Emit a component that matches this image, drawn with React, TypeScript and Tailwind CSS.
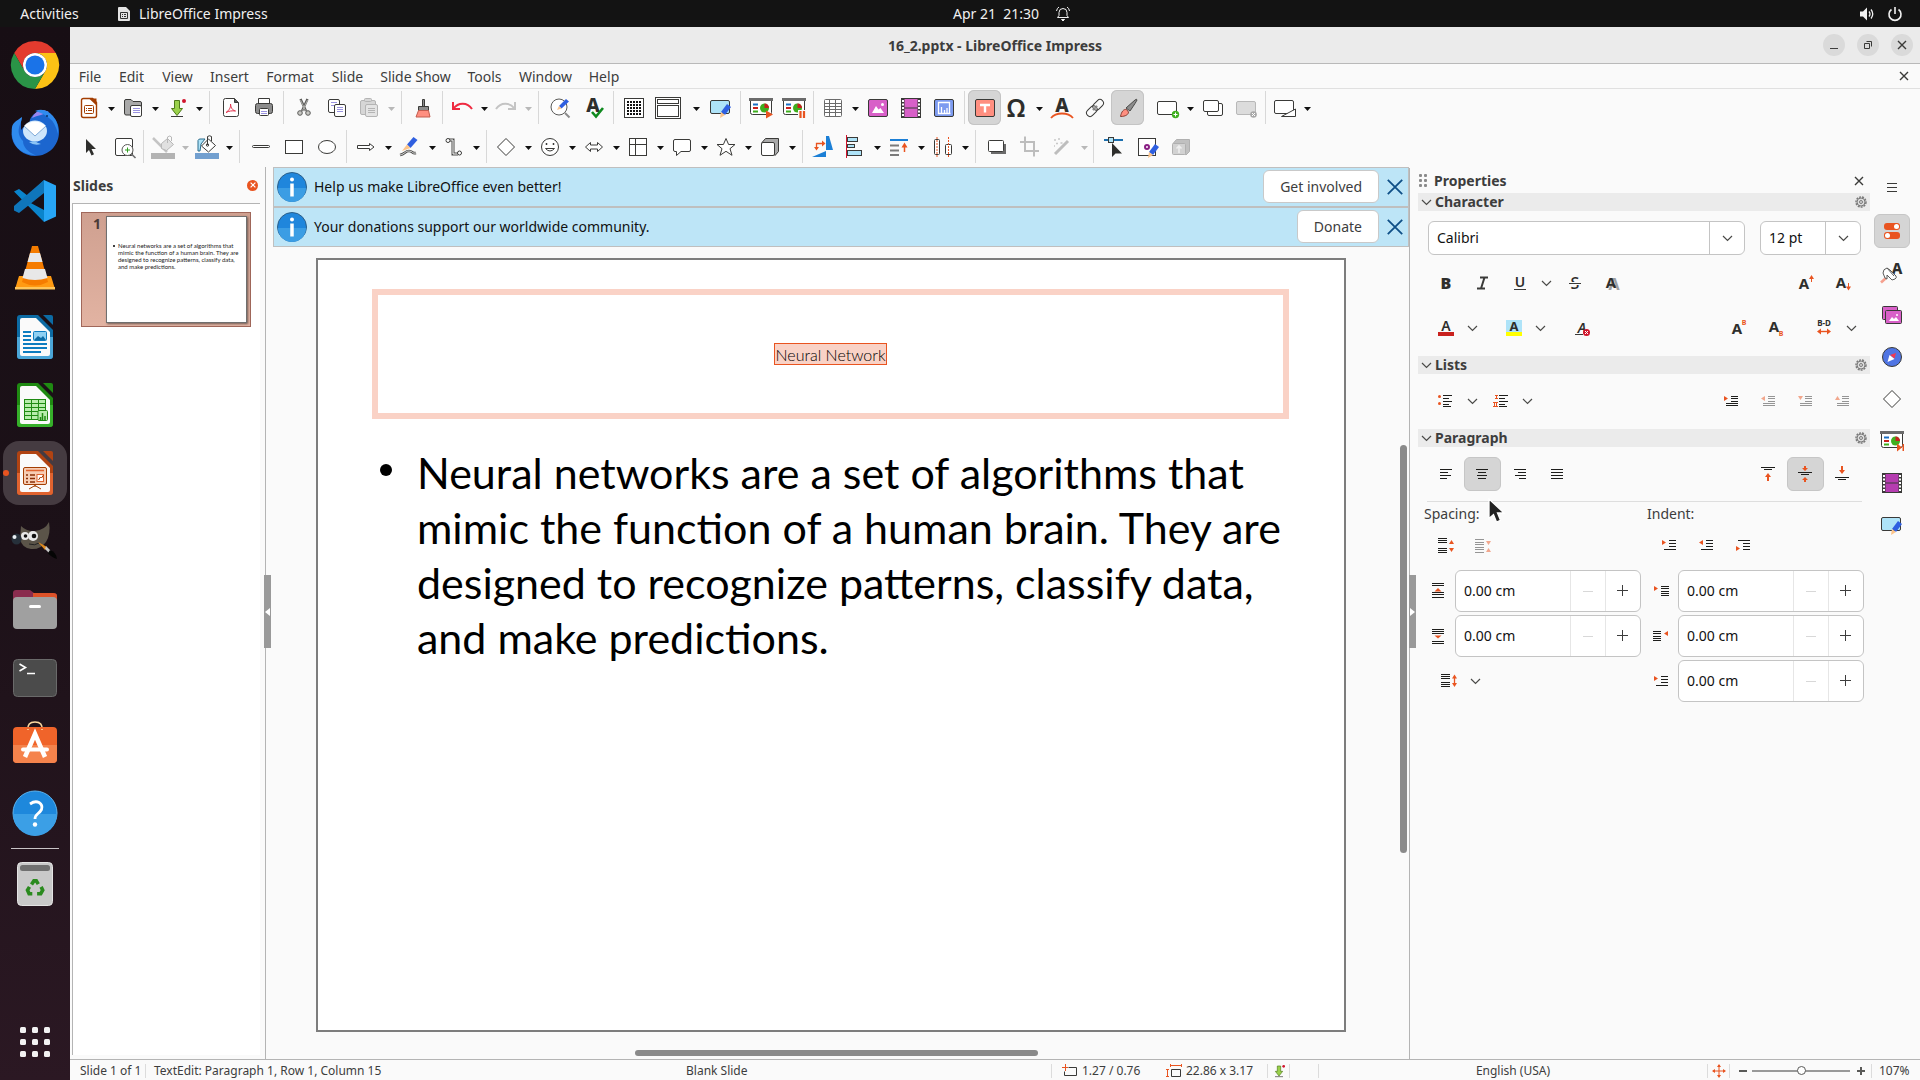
import React from "react";

type Kids = { children?: React.ReactNode };

const INK = "#3a3a38";
const ORANGE = "#e95420";

function Svg({ children, size = 24, box = 24 }: Kids & { size?: number; box?: number }) {
  return (
    <svg width={size} height={size} viewBox={`0 0 ${box} ${box}`} fill="none" stroke={INK} aria-hidden="true" className="block shrink-0 overflow-visible">
      {children}
    </svg>
  );
}

/* ---------- shared pieces of the drawings ---------- */

const Pencil = ({ dx = 0, dy = 0 }: { dx?: number; dy?: number }) => (
  <g transform={`translate(${dx} ${dy})`} stroke="none">
    <path d="M3 7 9 -1 13 2 7 10Z" fill="#2f5fe0" />
    <path d="M3 7 7 10 2 13Z" fill="#fcc48a" />
  </g>
);

const Lines = ({ x, y, w, n, step = 3, c = "#9a93e0" }: { x: number; y: number; w: number; n: number; step?: number; c?: string }) => (
  <g stroke={c}>
    {Array.from({ length: n }, (_, i) => (
      <path key={i} d={`M${x} ${y + i * step + 0.5}h${w}`} />
    ))}
  </g>
);

const Letter = ({ x = 12, y = 17, s = 16, c = "#2e2e2c", w = 700, children, italic = false }: Kids & { x?: number; y?: number; s?: number; c?: string; w?: number; italic?: boolean }) => (
  <text x={x} y={y} fontSize={s} fontWeight={w} fill={c} stroke="none" textAnchor="middle" fontStyle={italic ? "italic" : "normal"} fontFamily="Noto Sans, sans-serif">
    {children}
  </text>
);

const Board = () => (
  <>
    <path d="M1.500 4v12.500q0 2 2 2h17q2 0 2-2V4" fill="#fff" />
    <path d="M0 3.500h24" stroke="#6b6b6b" strokeWidth="3" />
    <path d="M4 8.500h5" stroke="#1a6fc4" strokeWidth="2" />
    <path d="M4 12h5" stroke="#c9211e" strokeWidth="2" />
    <path d="M4 15.500h5" stroke="#3faf1e" strokeWidth="2" />
    <circle cx="15.500" cy="12" r="4.500" fill="#3faf1e" stroke="none" />
    <path d="M15.500 12V7.500a4.500 4.500 0 0 1 4.500 4.500Z" fill="#c9211e" stroke="none" />
  </>
);

const MasterSlide = () => (
  <>
    <rect x="1.500" y="4.500" width="19" height="13" rx="1.500" fill="#aee3f8" />
    <Pencil dx={9} dy={9} />
  </>
);

const Film = ({ c = "#d860c8" }: { c?: string }) => (
  <>
    <rect x="2.500" y="2.500" width="19" height="19" fill={c} />
    <path d="M4 3v18M20 3v18" strokeWidth="3" />
    <path d="M4 4v17M20 4v17" stroke="#fff" strokeWidth="2" strokeDasharray="2 1.500" />
    <path d="M5.500 12h13" />
  </>
);

/* ---------- toolbar drawings ---------- */

const icons: Record<string, React.ReactNode> = {
  newDoc: (
    <>
      <path d="M4.500 4.500q0-2 2-2h9l4 4v13q0 2-2 2h-11q-2 0-2-2Z" fill="#fff" stroke="#a33e03" strokeWidth="1.400" />
      <path d="M12 2.500h7.500v7Z" fill="#a33e03" stroke="none" />
      <rect x="7.500" y="9.500" width="9" height="8" rx="1" stroke="#a33e03" />
      <path d="M9 12.500h1M11 12.500h4M9 14.500h1M11 14.500h4" stroke="#a33e03" />
    </>
  ),
  open: (
    <>
      <path d="M3.500 17V5q0-1.500 1.500-1.500h5l2 2h7q1.500 0 1.500 1.500v12H5q-1.500 0-1.500-2Z" fill="#a9a9a9" />
      <rect x="9.500" y="9.500" width="11" height="11" rx="1.500" fill="#fff" />
      <Lines x={12} y={12} w={7} n={3} step={2} />
    </>
  ),
  save: (
    <>
      <path d="M9.500 4.500h5v8h3l-5.500 7-5.500-7h3Z" fill="#9ad14b" stroke="#4f7a1b" />
      <path d="M6 20.500h12" />
      <circle cx="19" cy="5" r="2" fill="#d0142c" stroke="none" />
    </>
  ),
  pdf: (
    <>
      <path d="M4.500 4.500q0-2 2-2h9l4 4v12q0 2-2 2h-11q-2 0-2-2Z" fill="#fff" />
      <path d="M15.500 2.500v4h4" fill="#5a5a58" />
      <path d="M7 16.500c3-2 5-5 4.500-8.500.500 4.500 2 6 5 7-3.500-.500-6.500 0-9.500 1.500Z" stroke="#e0304a" />
    </>
  ),
  print: (
    <>
      <path d="M6.500 8V2.500h11V8" fill="#fff" />
      <rect x="3.500" y="7.500" width="17" height="10" rx="2" fill="#8c8c8c" />
      <rect x="7.500" y="12.500" width="9" height="7" rx="1" fill="#fff" />
      <Lines x={9} y={15} w={6} n={2} step={2} />
    </>
  ),
  cut: (
    <>
      <path d="M8.500 3 14 15M15.500 3 10 15" stroke="#5a5a58" strokeWidth="2.400" />
      <path d="M8.500 4 13.500 14.500M15.500 4 10.500 14.500" stroke="#c8c8c4" strokeWidth="0.800" />
      <circle cx="8" cy="17" r="2.300" fill="#c8c8c4" stroke="#5a5a58" />
      <circle cx="16" cy="17" r="2.300" fill="#c8c8c4" stroke="#5a5a58" />
    </>
  ),
  copy: (
    <>
      <rect x="3.500" y="3.500" width="11" height="13" rx="1.500" fill="#fff" />
      <Lines x={6} y={6} w={6} n={2} step={3} />
      <rect x="9.500" y="8.500" width="11" height="12" rx="1.500" fill="#fff" />
      <Lines x={12} y={11} w={6} n={3} step={2} />
    </>
  ),
  paste: (
    <>
      <rect x="3.500" y="4.500" width="15" height="14" rx="1.500" fill="#d6d6d6" stroke="#b4b4b4" />
      <rect x="7.500" y="2.500" width="7" height="3" rx="1" fill="#d6d6d6" stroke="#b4b4b4" />
      <rect x="8.500" y="8.500" width="12" height="12" rx="1.500" fill="#e4e4e4" stroke="#b4b4b4" />
      <Lines x={11} y={12} w={7} n={3} step={2} c="#b4b4b4" />
    </>
  ),
  clone: (
    <>
      <path d="M11.500 3.500h2V11h-2Z" fill="#8c8c8c" />
      <path d="M7.500 10.500h10v4h-10Z" fill="#8c8c8c" />
      <path d="M7.500 14.500h10l1.500 6.500H5Z" fill="#ff8f80" stroke="#c35c4e" />
    </>
  ),
  undo: <path d="M3 6v7h7M3.500 12.500C8 6.500 17 5.500 22 13" stroke="#ef2b41" strokeWidth="2" />,
  redo: <path d="M21 6v7h-7M20.500 12.500C16 6.500 7 5.500 2 13" stroke="#c4c4c4" strokeWidth="2" />,
  find: (
    <>
      <circle cx="11" cy="11" r="8" fill="#fff" stroke="#5a5a58" />
      <path d="M17 17l4.500 4.500" stroke="#8c8c8c" strokeWidth="2" />
      <path d="M11 10l7-7 3 2.500-7.500 7Z" fill="#2f5fe0" stroke="none" />
      <path d="M11 10l2.500 2.500L9 14Z" fill="#fcc48a" stroke="none" />
    </>
  ),
  spell: (
    <>
      <Letter x={12} y={16} s={19} w={800}>A</Letter>
      <path d="M11 16l4 4.500L22 12" stroke="#0f8a1f" strokeWidth="2.600" />
    </>
  ),
  grid: (
    <>
      <rect x="2.500" y="2.500" width="19" height="19" fill="#fff" />
      {[6, 9, 12, 15, 18].map((y) => [6, 9, 12, 15, 18].map((x) => <rect key={`${x}-${y}`} x={x - 1} y={y - 1} width="2" height="2" fill="#111" stroke="none" />))}
    </>
  ),
  display: (
    <>
      <rect x=".500" y="1.500" width="25" height="21" fill="#fff" />
      <rect x="2.500" y="3.500" width="21" height="4" fill="#fff" />
      <rect x="2.500" y="9.500" width="21" height="11" fill="#fff" />
    </>
  ),
  master: <MasterSlide />,
  start: (
    <>
      <Board />
      <path d="M17 14.500l7 4-7 4Z" fill={ORANGE} stroke="none" />
    </>
  ),
  pause: (
    <>
      <Board />
      <path d="M16 14h8v9h-8Z" fill="#fafafa" stroke="none" />
      <path d="M18.500 15v7M22 15v7" stroke={ORANGE} strokeWidth="2.200" />
    </>
  ),
  table: (
    <>
      <rect x="3.500" y="3.500" width="17" height="17" rx="1" fill="#fff" stroke="#6b6b6b" />
      <path d="M8.500 3v17M14.500 3v17M3 7.500h17M3 10.500h17M3 13.500h17M3 16.500h17" stroke="#6b6b6b" />
    </>
  ),
  image: (
    <>
      <rect x="2.500" y="3.500" width="19" height="17" rx="1.500" fill="#d860c8" />
      <path d="M6 17l4-7 2.500 3.500L14.500 12l3.500 5Z" fill="#fff" stroke="none" />
      <circle cx="16.500" cy="8.500" r="1.500" fill="#fff" stroke="none" />
    </>
  ),
  film: <Film />,
  chart: (
    <>
      <rect x="2.500" y="3.500" width="19" height="17" rx="1.500" fill="#7d9bf0" />
      <path d="M6.500 6v11.500h12M6 6.500h12M17.500 6v12M9.500 17v-6M12.500 17v-3M15 17v-5" stroke="#fff" strokeWidth="1.300" />
    </>
  ),
  textBox: (
    <>
      <rect x="2.500" y="3.500" width="19" height="17" rx="1.500" fill="#ff8f80" />
      <path d="M7 9h10M12 9v7.500" stroke="#fff" strokeWidth="2.400" />
    </>
  ),
  omega: <Letter x={11} y={21} s={25} w={600}>Ω</Letter>,
  fontwork: (
    <>
      <Letter x={12} y={16} s={19} w={800}>A</Letter>
      <path d="M1 22c5-6 17-6 22 0" stroke={ORANGE} strokeWidth="1.800" />
    </>
  ),
  link: (
    <g transform="rotate(-45 12 12)">
      <rect x="1.500" y="8.500" width="12" height="7" rx="3.500" />
      <rect x="10.500" y="8.500" width="12" height="7" rx="3.500" />
      <path d="M9 12h6" strokeWidth="2" stroke="#8c8c8c" />
    </g>
  ),
  brush: (
    <>
      <path d="M10 12 19 4q2-1.500 2 0-.500 1.500-7 11Z" fill="#8c8c8c" stroke="#4a4a48" />
      <path d="M4.500 20.500c1-5 3-7.500 6-7l2 2.500c0 2.500-3 4.500-8 4.500Z" fill="#ff8f80" stroke="#8a4035" />
    </>
  ),
  newSlide: (
    <>
      <rect x="1.500" y="5.500" width="19" height="13" rx="1.500" fill="#fff" />
      <circle cx="19.500" cy="18.500" r="3.700" fill="#3faf1e" stroke="none" />
      <path d="M17.500 18.500h4M19.500 16.500v4" stroke="#fff" />
    </>
  ),
  dupSlide: (
    <>
      <rect x="6.500" y="7.500" width="15" height="12" rx="1.500" fill="#fff" />
      <rect x="2.500" y="4.500" width="15" height="11" rx="1.500" fill="#fff" />
    </>
  ),
  delSlide: (
    <>
      <rect x="2.500" y="5.500" width="19" height="13" rx="1.500" fill="#dcdcdc" stroke="#b8b8b8" />
      <circle cx="19.500" cy="18.500" r="3.300" fill="#a8a8a8" stroke="none" />
      <path d="M18 17l3 3M21 17l-3 3" stroke="#fff" />
    </>
  ),
  layout: (
    <>
      <rect x="1.500" y="4.500" width="19" height="13" rx="1.500" fill="#fff" />
      <path d="M8.500 20.500 22.500 13v7.500Z" fill="#fff" />
    </>
  ),
  pointer: <path d="M8 4v14l3-3 2.500 5.500 2.500-1.200L13.500 14H18Z" fill="#2e2e2c" stroke="none" />,
  zoom: (
    <>
      <rect x="2.500" y="3.500" width="17" height="17" rx="1.500" fill="#fff" />
      <circle cx="14.500" cy="15" r="5.500" fill="#fff" stroke="#5a5a58" />
      <path d="M12 15h5M14.500 12.500v5" stroke="#2f9e1e" />
      <path d="M18.500 19l4 4" stroke="#6b6b6b" strokeWidth="1.600" />
    </>
  ),
  lineColor: (
    <>
      <path d="M2 3l14 14" stroke="#c4c4c4" strokeWidth="2.500" />
      <path d="M10.500 8.500l6-5 6 6-7 6-5-2Z" fill="#e0e0e0" stroke="#b8b8b8" />
      <path d="M16.500 8V2q2.500-2 4 0v4" stroke="#b8b8b8" />
      <path d="M0 21h24" stroke="#b3b3b3" strokeWidth="6" />
    </>
  ),
  fillColor: (
    <>
      <path d="M3 16V5.500q.500-1.500 2-1.500h5l-4 5-1 7Z" fill="#aee3f8" stroke="#2b6c8c" />
      <path d="M13.500 4l7 6.500-7 6.500-7-6Z" fill="#fff" />
      <path d="M12.500 10V1.500q2-1.500 4 0V6" />
      <circle cx="12.500" cy="10" r="1.200" />
      <path d="M0 21h24" stroke="#729fcf" strokeWidth="6" />
    </>
  ),
  line: <rect x="3.500" y="10.500" width="17" height="2" rx="1" fill="#fff" />,
  rect: <rect x="3.500" y="5.500" width="17" height="13" fill="#fff" />,
  ellipse: <ellipse cx="12" cy="12" rx="8.500" ry="6.500" fill="#fff" />,
  arrowLine: <path d="M3.500 10.500h12v-2l4.500 3.500-4.500 3.500v-2h-12Z" fill="#fff" />,
  curve: (
    <>
      <path d="M9 9.500 15.500 2l4 3-7 8Z" fill="#2f5fe0" stroke="none" />
      <path d="M9 9.500l3.500 3.500L4 16Z" fill="#fcc48a" stroke="none" />
      <path d="M2 20c5-1 5-4 9-4s3 3 7 2" stroke="#4a4a48" strokeWidth="2.600" />
      <path d="M2 20c5-1 5-4 9-4s3 3 7 2" stroke="#fff" strokeWidth="0.800" />
    </>
  ),
  connector: (
    <>
      <path d="M7 5h4v14h5" strokeWidth="3" stroke="#4a4a48" />
      <path d="M7 5h4v14h5" stroke="#fff" />
      <circle cx="6" cy="5.500" r="2" fill="#fff" />
      <circle cx="17.500" cy="18" r="2" fill="#fff" />
    </>
  ),
  diamond: <path d="M12 3.500 20.500 12 12 20.500 3.500 12Z" fill="#fff" />,
  smiley: (
    <>
      <circle cx="12" cy="12" r="8.500" fill="#fff" />
      <path d="M7.500 13.500q4.500 5 9 0Z" fill="#fff" />
      <path d="M8.500 8v2M15.500 8v2" strokeWidth="1.500" />
    </>
  ),
  dblArrow: <path d="M3.500 12l5-4.500v2.500h7V7.500l5 4.500-5 4.500V14h-7v2.500Z" fill="#fff" />,
  flow: (
    <>
      <rect x="3.500" y="3.500" width="17" height="17" fill="#fff" />
      <path d="M9.500 3v17M3 9.500h17" />
    </>
  ),
  callout: <path d="M5 4.500h14q1.500 0 1.500 1.500v9q0 1.500-1.500 1.500h-8l-4.500 4v-4H5q-1.500 0-1.500-1.500V6Q3.500 4.500 5 4.500Z" fill="#fff" />,
  star: <path d="M12 3.500l2.600 6h6.400l-5 4.200 2 6.600-6-4-6 4 2-6.600-5-4.200h6.400Z" fill="#fff" />,
  cube: (
    <>
      <path d="M4 7.500 7.500 3.500H20.500v13l-3.500 4Z" fill="#a9a9a9" />
      <rect x="3.500" y="7.500" width="13" height="13" rx="1.500" fill="#fff" />
    </>
  ),
  rotate: (
    <>
      <path d="M15 1h3l4 14h-7Z" fill="#1b7fd6" stroke="none" />
      <path d="M1 22l14-6v6Z" fill="#1b7fd6" stroke="none" />
      <path d="M5.500 14V8.500H12" stroke={ORANGE} strokeWidth="1.300" />
      <path d="M3 12h5l-2.500 3.500ZM11 5.500v6l3.500-3Z" fill={ORANGE} stroke="none" />
    </>
  ),
  align: (
    <>
      <rect x="4.500" y="2.500" width="10" height="4" fill="#aee3f8" />
      <rect x="4.500" y="9.500" width="7" height="3" fill="#aee3f8" />
      <rect x="4.500" y="15.500" width="14" height="5" fill="#aee3f8" />
      <path d="M3.500 0v23" stroke="#d0142c" />
    </>
  ),
  arrange: (
    <>
      <path d="M3 5h18" stroke="#1b7fd6" strokeWidth="2" />
      <path d="M3 10.500h9M3 15.500h9M3 20h9" stroke="#7a7a7a" strokeWidth="2" />
      <path d="M17.500 17v-6" stroke={ORANGE} strokeWidth="1.500" />
      <path d="M14.500 12.500l3-5 3 5Z" fill={ORANGE} stroke="none" />
    </>
  ),
  distribute: (
    <>
      <rect x="3.500" y="4.500" width="5" height="15" rx="1" fill="#fff" />
      <rect x="14.500" y="9.500" width="6" height="10" rx="1" fill="#fff" />
      <path d="M6 2v20M17.500 2v20" stroke={ORANGE} strokeDasharray="2 1" />
    </>
  ),
  shadow: (
    <>
      <rect x="6" y="9" width="15" height="10" fill="#6b6b6b" stroke="none" />
      <rect x="3.500" y="5.500" width="15" height="11" rx="1" fill="#fff" />
    </>
  ),
  crop: <path d="M2 7.500h14V22M7 2v14.500h14" stroke="#bdbdbd" strokeWidth="2" transform="translate(0 -.500)" />,
  wand: (
    <>
      <path d="M5 19 18 6" stroke="#bdbdbd" strokeWidth="3" />
      <path d="M4 5h2M8 4h2M6 8.500h2M10.500 8h2M4 11h1" stroke="#c8c8c8" strokeWidth="1.500" />
    </>
  ),
  points: (
    <>
      <path d="M2 5h19" stroke="#1b6fae" strokeWidth="2" />
      <rect x="6.500" y="2.500" width="5" height="5" fill="#aee3f8" />
      <path d="M10 8v14l3.500-3.500h6.500Z" fill="#2e2e2c" stroke="none" />
    </>
  ),
  glue: (
    <>
      <rect x="2.500" y="3.500" width="17" height="17" fill="#fff" />
      <circle cx="11" cy="12" r="2" stroke="#8a1f84" strokeWidth="2" />
      <Pencil dx={10} dy={10} />
    </>
  ),
  extrude: (
    <>
      <path d="M4 8.500 7.500 4.500H20.500v12L17 20Z" fill="#c0c0c0" stroke="#b0b0b0" />
      <rect x="3.500" y="8.500" width="13" height="11" rx="1" fill="#d2d2d2" stroke="#b0b0b0" />
      <path d="M10 18v-6M7.500 13.500 10 11l2.500 2.500" stroke="#eee" strokeWidth="1.600" />
    </>
  ),
};

type Tool = { icon: string; label: string; menu?: boolean; off?: boolean; on?: boolean; wide?: string } | { gap: string; bare?: boolean };

const G7: Tool = { gap: "w-[7px]" };
const G8: Tool = { gap: "w-2" };
const G9: Tool = { gap: "w-[9px]" };

const standardBar: Tool[] = [
  { icon: "newDoc", label: "New", menu: true },
  { icon: "open", label: "Open", menu: true },
  { icon: "save", label: "Save", menu: true },
  G9,
  { icon: "pdf", label: "Export as PDF" },
  { icon: "print", label: "Print" },
  G7,
  { icon: "cut", label: "Cut" },
  { icon: "copy", label: "Copy" },
  { icon: "paste", label: "Paste", menu: true, off: true },
  G9,
  { icon: "clone", label: "Clone formatting" },
  G7,
  { icon: "undo", label: "Undo", menu: true },
  { icon: "redo", label: "Redo", menu: true, off: true },
  G9,
  { icon: "find", label: "Find and replace" },
  { icon: "spell", label: "Spelling", wide: "w-[34px]" },
  G7,
  { icon: "grid", label: "Display grid" },
  { icon: "display", label: "Display views", menu: true, wide: "w-[41px]" },
  { gap: "w-[2px]", bare: true },
  { icon: "master", label: "Master slide" },
  G7,
  { icon: "start", label: "Start from first slide" },
  { icon: "pause", label: "Start from current slide" },
  G7,
  { icon: "table", label: "Insert table", menu: true },
  { icon: "image", label: "Insert image" },
  { icon: "film", label: "Insert audio or video" },
  { icon: "chart", label: "Insert chart" },
  G8,
  { icon: "textBox", label: "Insert text box", on: true },
  { icon: "omega", label: "Special character", menu: true },
  { icon: "fontwork", label: "Fontwork" },
  { icon: "link", label: "Insert hyperlink" },
  { icon: "brush", label: "Show draw functions", on: true },
  { gap: "w-2", bare: true },
  { icon: "newSlide", label: "New slide", menu: true },
  { icon: "dupSlide", label: "Duplicate slide" },
  { icon: "delSlide", label: "Delete slide", off: true },
  G7,
  { icon: "layout", label: "Slide layout", menu: true },
];

const drawBar: Tool[] = [
  { icon: "pointer", label: "Select", wide: "w-[35px]" },
  { icon: "zoom", label: "Zoom and pan", wide: "w-8" },
  G7,
  { icon: "lineColor", label: "Line color", menu: true, off: true },
  { icon: "fillColor", label: "Fill color", menu: true },
  G9,
  { icon: "line", label: "Line" },
  { icon: "rect", label: "Rectangle" },
  { icon: "ellipse", label: "Ellipse" },
  G7,
  { icon: "arrowLine", label: "Lines and arrows", menu: true },
  { icon: "curve", label: "Curves and polygons", menu: true },
  { icon: "connector", label: "Connectors", menu: true },
  G8,
  { icon: "diamond", label: "Basic shapes", menu: true },
  { icon: "smiley", label: "Symbol shapes", menu: true },
  { icon: "dblArrow", label: "Block arrows", menu: true },
  { icon: "flow", label: "Flowchart", menu: true },
  { icon: "callout", label: "Callouts", menu: true },
  { icon: "star", label: "Stars and banners", menu: true },
  { icon: "cube", label: "3D objects", menu: true },
  G8,
  { icon: "rotate", label: "Rotate" },
  { icon: "align", label: "Align objects", menu: true },
  { icon: "arrange", label: "Arrange", menu: true },
  { icon: "distribute", label: "Distribute", menu: true },
  G9,
  { icon: "shadow", label: "Shadow" },
  { icon: "crop", label: "Crop image", off: true },
  { icon: "wand", label: "Filter", menu: true, off: true },
  G7,
  { icon: "points", label: "Toggle point edit mode", wide: "w-[34px]" },
  { icon: "glue", label: "Show gluepoint functions" },
  { icon: "extrude", label: "Toggle extrusion", off: true },
];

function Toolbar({ tools, label }: { tools: Tool[]; label: string }) {
  return (
    <div role="toolbar" aria-label={label} className="flex items-center pl-[3px]">
      {tools.map((t, i) =>
        "gap" in t ? (
          <div key={i} className={`flex h-[33px] shrink-0 justify-center ${t.gap}`}>
            {!t.bare && <span className="w-px bg-[#d8d8d8]" />}
          </div>
        ) : (
          <div key={i} className="flex shrink-0 items-center">
            <button
              aria-label={t.label}
              className={`flex h-[35px] items-center rounded-md ${t.menu ? "pl-1" : "pl-[5px]"} ${t.wide ?? "w-[33px]"} ${t.on ? "bg-[#d5d5d5] ring-1 ring-[#c4c4c4] ring-inset" : ""}`}
            >
              {t.icon === "display" ? (
                <svg width="26" height="24" viewBox="0 0 26 24" fill="none" stroke={INK} aria-hidden="true" className="ml-px">
                  {icons.display}
                </svg>
              ) : (
                <Svg>{icons[t.icon]}</Svg>
              )}
            </button>
            {t.menu && (
              <button aria-label={`${t.label} options`} className="flex h-[33px] w-[11px] items-center justify-center pt-[3px]">
                <svg width="7" height="4" viewBox="0 0 7 4" aria-hidden="true">
                  <path d="M0 0h7L3.500 4Z" fill={t.off ? "#b8b8b8" : "#111"} />
                </svg>
              </button>
            )}
          </div>
        )
      )}
    </div>
  );
}

/* ---------- dock ---------- */

const LibreDoc = ({ dark, light, children }: Kids & { dark: string; light: string }) => (
  <>
    <path d="M6 5q0-3 3-3h18l15 15v26q0 3-3 3H9q-3 0-3-3Z" fill={dark} stroke="none" />
    <path d="M6 24h36v19q0 3-3 3H9q-3 0-3-3Z" fill={light} stroke="none" />
    <path d="M9 7q0-2 2-2h14l14 14v22q0 2-2 2H11q-2 0-2-2Z" fill="#fafafa" stroke="none" />
    <path d="M32 2h8q2 0 2 2v8Z" fill={dark} stroke="none" />
    <g transform="translate(-1 1)">{children}</g>
  </>
);

const dockIcons: { label: string; active?: boolean; art: React.ReactNode }[] = [
  {
    label: "Google Chrome",
    art: (
      <g stroke="none">
        <path d="M24 12H44.800A24 24 0 0 0 3.200 12L13.600 30A12 12 0 0 1 24 12Z" fill="#e33b2e" />
        <path d="M44.800 12H24A12 12 0 0 1 34.400 30L24 48A24 24 0 0 0 44.800 12Z" fill="#fcc215" />
        <path d="M3.200 12A24 24 0 0 0 24 48L34.400 30A12 12 0 0 1 13.600 30Z" fill="#2a9447" />
        <circle cx="24" cy="24" r="12" fill="#fff" />
        <circle cx="24" cy="24" r="9.500" fill="#1a73e8" />
      </g>
    ),
  },
  {
    label: "Thunderbird",
    art: (
      <g stroke="none">
        <path d="M10 9C6 13-1 20 1 29c2 10 12 18 23 18 14 0 24-11 24-24 0-6-2-11-5-14l-3 1C36 2 28 0 22 6c-3 3-4 6-3 9-4 1-7 3-9 6Z" fill="#1c66cf" />
        <path d="M1 18c-2 14 6 28 23 28-7-3-12-8-12-14-4-4-5-9-4-13 1-5 3-7 3-11C7 11 2 13 1 18Z" fill="#2f8bee" />
        <path d="M21 9C24 2 31-1 38 3l-8 3q-5 1-9 3Z" fill="#9a86ee" />
        <path d="M24 2q10-4 18 5 6 7 5 18-3-12-9-16-6-5-14-7Z" fill="#2f8bee" />
        <ellipse cx="24" cy="22" rx="12" ry="10.500" fill="#cfe6fb" />
        <path d="M13 17q11-9 22 0L24 27Z" fill="#fff" />
        <path d="M13 17l11 10 11-10" stroke="#7fa9d6" fill="none" />
        <path d="M18 33q5 4 12 2-4-1-6-3Z" fill="#8cc4f5" />
        <circle cx="36" cy="7" r="1" fill="#0b2f66" />
      </g>
    ),
  },
  {
    label: "Visual Studio Code",
    art: (
      <g stroke="none">
        <path d="M33 3 17 19 8 12 3 14.500 33 45V33L16 24 33 15Z" fill="#0a84cc" />
        <path d="M3 33.500 8 36 33 16V3L3 29Z" fill="#0f76bb" />
        <path d="M33 3l12 5.500v31L33 45Z" fill="#27a5f5" />
      </g>
    ),
  },
  {
    label: "VLC media player",
    art: (
      <g stroke="none">
        <path d="M8 31h32l4 13H4Z" fill="#ff9a12" />
        <path d="M4 42h40v2.500H4Z" fill="#ffc65a" />
        <path d="M21 1h6l10 36q-13 7-26 0Z" fill="#f57c00" />
        <path d="M19 8h10l2.500 9h-15ZM14 24h20l2.500 9q-12.500 4-25 0Z" fill="#e8e8e8" />
      </g>
    ),
  },
  {
    label: "LibreOffice Writer",
    art: (
      <LibreDoc dark="#0c6ba4" light="#4ba6d8">
        <path d="M13 18h8M13 22h8M13 26h8M13 30h24M13 34h24M13 38h18" stroke="#0c7cc0" strokeWidth="1.800" />
        <rect x="23.500" y="17.500" width="13" height="9" rx="1" fill="#8fd0f2" stroke="#0c7cc0" />
        <path d="M24 26l4-4 3 2 2-2 3 4Z" fill="#0c6ba4" stroke="none" />
      </LibreDoc>
    ),
  },
  {
    label: "LibreOffice Calc",
    art: (
      <LibreDoc dark="#1f8a12" light="#36b02a">
        <rect x="14.500" y="17.500" width="21" height="20" fill="#b8ecac" stroke="#1f8a12" />
        <path d="M21.500 17v20M28.500 17v20M14 21.500h21M14 25.500h21M14 29.500h21M14 33.500h21" stroke="#1f8a12" />
        <rect x="28" y="28.500" width="9.500" height="10" rx="1" fill="#b8ecac" stroke="#1f8a12" />
        <path d="M30.500 38v-3M32.500 38v-7M35 38v-4" stroke="#1f8a12" strokeWidth="1.500" />
      </LibreDoc>
    ),
  },
  {
    label: "LibreOffice Impress",
    active: true,
    art: (
      <LibreDoc dark="#b04312" light="#e0632f">
        <rect x="13.500" y="17.500" width="23" height="17" rx="1.500" fill="#f6cdb4" stroke="#a33e03" />
        <path d="M16 20.500h18" stroke="#e0632f" strokeWidth="1.500" />
        <path d="M16 25h2M16 28.500h2M16 32h2M20 25h5M20 28.500h5M20 32h5" stroke="#8a2f06" strokeWidth="1.600" />
        <rect x="27" y="24.500" width="6.500" height="7" fill="#fff" stroke="#e0632f" />
        <path d="M28.500 30l2-3 1 1 2-3M19 39l6-3.500L31 39M25 35v2" stroke="#a33e03" />
      </LibreDoc>
    ),
  },
  {
    label: "GIMP",
    art: (
      <g stroke="none">
        <path d="M10 9q6 6 14 5 10-1 14-9 2 12-3 20-6 8-15 7-9-1-11-10Z" fill="#5b5449" />
        <circle cx="14" cy="19" r="4" fill="#e8e8e8" />
        <circle cx="22" cy="19" r="5" fill="#e8e8e8" />
        <circle cx="14.500" cy="19" r="1.800" fill="#111" />
        <circle cx="23" cy="19" r="2.300" fill="#111" />
        <ellipse cx="5.500" cy="22" rx="5" ry="5.500" fill="#26303a" />
        <circle cx="3.500" cy="20" r="2" fill="#e8eef2" />
        <path d="M18 27q6 2 10-1" stroke="#222" fill="none" />
        <path d="M27 25l9 5-2 3Z" fill="#e08a1e" />
        <path d="M35 29l5 5-2 2-4-4Z" fill="#c8c8c8" />
        <path d="M39 33q6 2 7 9-6-2-9-6Z" fill="#050505" />
      </g>
    ),
  },
  {
    label: "Files",
    art: (
      <g stroke="none">
        <path d="M2 13V8q0-3 3-3h14l4 3h19q4 0 4 3v6H2Z" fill="#8a2c4e" />
        <path d="M22 8h20q4 0 4 3v6H22Z" fill="#dd5228" />
        <rect x="2" y="12" width="44" height="32" rx="4" fill="#a0a0a0" />
        <rect x="18" y="20" width="12" height="3" rx="1.500" fill="#fff" />
      </g>
    ),
  },
  {
    label: "Terminal",
    art: (
      <>
        <rect x="2.500" y="6.500" width="43" height="37" rx="4" fill="#4b4b4b" stroke="#6a6a6a" />
        <path d="M8.500 11l6 3.500-6 3.500M16 20.500h8" stroke="#fff" strokeWidth="1.600" />
      </>
    ),
  },
  {
    label: "Ubuntu Software",
    art: (
      <>
        <path d="M17 9q-1-8 7-8t7 8" stroke="#fcd9a0" strokeWidth="1.600" />
        <rect x="2" y="6" width="44" height="36" rx="4" fill="#f0642a" stroke="none" />
        <path d="M2 24h44v14q0 4-4 4H6q-4 0-4-4Z" fill="#f5834c" stroke="none" />
        <path d="M17 9v-1M31 9v-1" stroke="#fcd9a0" strokeWidth="1.600" />
        <path d="M14 36 24 13 34 36" stroke="#fff" strokeWidth="4.500" />
        <path d="M12 28.500h24" stroke="#fff" strokeWidth="4" strokeLinecap="round" />
      </>
    ),
  },
  {
    label: "Help",
    art: (
      <>
        <circle cx="24" cy="24" r="22" fill="#1e88dc" stroke="#5bb4f0" />
        <path d="M2 25a22 22 0 0 0 44 0Z" fill="#3b9fe6" stroke="none" />
        <path d="M19 15q5-3.500 9-1.500 4 2.500 2.500 7-1 2-3.500 4-3 2.500-3 5.500" stroke="#fff" strokeWidth="2.800" />
        <circle cx="24" cy="35.500" r="2.200" fill="#fff" stroke="none" />
      </>
    ),
  },
];

function Dock() {
  return (
    <nav aria-label="Dock" className="flex w-[70px] shrink-0 flex-col items-center bg-linear-to-b from-[#170e14] via-[#1c1118] to-[#2b1823] pt-[6px] pb-[14px]">
      {dockIcons.map((d) => (
        <button
          key={d.label}
          aria-label={d.label}
          className={`relative mb-1 flex h-16 w-16 shrink-0 items-center justify-center rounded-2xl ${d.active ? "bg-[#453b41]" : ""}`}
        >
          {d.active && <span className="absolute left-0 h-[6px] w-[6px] rounded-full bg-[#e95420]" />}
          <Svg size={48} box={48}>{d.art}</Svg>
        </button>
      ))}
      <span className="-mt-px h-px w-12 bg-[#c8c4c6]" />
      <button aria-label="Trash" className="mt-[11px] flex h-12 w-16 items-center justify-center">
        <Svg size={48} box={48}>
          <rect x="6.500" y="2.500" width="35" height="43" rx="4" fill="#c9c9c9" stroke="#e4e4e4" />
          <rect x="9" y="5" width="30" height="6" rx="2.500" fill="#707070" stroke="none" />
          <g stroke="#2a8a1e" strokeWidth="4.500" transform="translate(4.500 4.500) scale(.8)">
            <path d="M20 25l3-4.500h3l2.500 4M32 28l2 4-2.500 4.500H27M21 36.500h-4L15 32l2.500-4" />
          </g>
        </Svg>
      </button>
      <button aria-label="Show applications" className="mt-auto flex h-12 w-12 items-center justify-center">
        <Svg size={30} box={30}>
          {[0, 12, 24].map((y) => [0, 12, 24].map((x) => <rect key={`${x}-${y}`} x={x} y={y} width="6" height="6" rx="1.500" fill="#f2f2f2" stroke="none" />))}
        </Svg>
      </button>
    </nav>
  );
}

/* ---------- top of the screen and of the window ---------- */

function TopBar() {
  return (
    <header className="grid h-[27px] shrink-0 grid-cols-[1fr_auto_1fr] items-center bg-[#131313] text-[14px] leading-5 text-[#f0f0f0]">
      <div className="flex items-center">
        <button className="ml-[18px] w-[63px] whitespace-nowrap">Activities</button>
        <div className="ml-9 flex items-center gap-2">
          <svg width="14" height="16" viewBox="0 0 14 16" aria-hidden="true">
            <path d="M1 2q0-1 1-1h7l4 4v9q0 1-1 1H2q-1 0-1-1Z" fill="#e4e4e4" />
            <path d="M3.500 6.500h7v6h-7ZM5 8.500h1M7 8.500h2M5 10.500h1M7 10.500h2" stroke="#333" fill="none" />
          </svg>
          <span>LibreOffice Impress</span>
        </div>
      </div>
      <div className="flex items-center gap-4 pl-[104px]">
        <span className="whitespace-pre">Apr 21  21:30</span>
        <svg width="16" height="16" viewBox="0 0 16 16" fill="none" stroke="#f0f0f0" aria-hidden="true">
          <path d="M2.500 11.500h11l-1.500-2V6.500q0-4-4-4t-4 4v3ZM1.500 5q.500-3 2.500-4M14.500 5q-.500-3-2.500-4" />
          <path d="M6.500 13.500h3l-1.500 1.500Z" fill="#f0f0f0" />
        </svg>
      </div>
      <div className="flex items-center justify-end gap-3 pr-[17px]">
        <svg width="16" height="16" viewBox="0 0 16 16" fill="none" stroke="#f0f0f0" aria-hidden="true">
          <path d="M1 5.500h3l4-4v13l-4-4H1Z" fill="#f0f0f0" stroke="none" />
          <path d="M10 5.500q2 2.500 0 5M12 3.500q3.500 4.500 0 9" strokeWidth="1.300" />
        </svg>
        <svg width="16" height="16" viewBox="0 0 16 16" fill="none" stroke="#f0f0f0" strokeWidth="1.600" aria-hidden="true">
          <path d="M8 1v7M4.500 3.500a6 6 0 1 0 7 0" />
        </svg>
      </div>
    </header>
  );
}

const Cross = ({ size = 10, color = INK, weight = 1.4 }: { size?: number; color?: string; weight?: number }) => (
  <svg width={size} height={size} viewBox="0 0 10 10" stroke={color} strokeWidth={weight} aria-hidden="true" className="block">
    <path d="M1 1l8 8M9 1 1 9" />
  </svg>
);

function TitleBar() {
  const round = "flex h-[22px] w-[22px] items-center justify-center rounded-full bg-[#dadada]";
  return (
    <div className="grid h-[37px] shrink-0 grid-cols-[1fr_auto_1fr] items-center border-b border-[#b9b9b9] bg-[#ebebeb] pr-[7px]">
      <span />
      <h1 className="pl-[7px] text-[14px] font-bold text-[#3d3d3d]">16_2.pptx - LibreOffice Impress</h1>
      <div className="flex justify-end gap-3">
        <button aria-label="Minimize" className={round}>
          <span className="mt-1.5 h-px w-2 bg-[#3d3d3d]" />
        </button>
        <button aria-label="Restore" className={round}>
          <svg width="10" height="10" viewBox="0 0 10 10" fill="none" stroke={INK} aria-hidden="true">
            <path d="M1.500 3.500h5v5h-5ZM3.500 1.500h5v5" />
          </svg>
        </button>
        <button aria-label="Close window" className={round}>
          <Cross />
        </button>
      </div>
    </div>
  );
}

const menus: [string, string][] = [
  ["File", "w-10"],
  ["Edit", "w-[43px]"],
  ["View", "w-[49px]"],
  ["Insert", "w-[55px]"],
  ["Format", "w-[66px]"],
  ["Slide", "w-[49px]"],
  ["Slide Show", "w-[87px]"],
  ["Tools", "w-[51px]"],
  ["Window", "w-[71px]"],
  ["Help", "w-[46px]"],
];

function MenuBar() {
  return (
    <div className="flex h-[25px] shrink-0 items-center border-b border-[#e0e0e0] text-[14px] text-[#3d3d3d]">
      {menus.map(([name, width]) => (
        <button key={name} className={`text-center whitespace-nowrap ${width}`}>
          {name}
        </button>
      ))}
      <button aria-label="Close document" className="mr-[11px] ml-auto">
        <Cross />
      </button>
    </div>
  );
}

/* ---------- slides panel ---------- */

const bodyLines = [
  "Neural networks are a set of algorithms that",
  "mimic the function of a human brain. They are",
  "designed to recognize patterns, classify data,",
  "and make predictions.",
];

function SlidesPanel() {
  return (
    <aside aria-label="Slides" className="relative flex w-[196px] shrink-0 flex-col border-r border-[#b4b4b4] bg-[#fafafa]">
      <div className="flex h-9 items-center justify-between pr-[7px] pl-[3px]">
        <h2 className="text-[14px] font-bold text-[#3d3d3d]">Slides</h2>
        <button aria-label="Close pane" className="flex h-[11px] w-[11px] items-center justify-center rounded-full bg-[#e95420]">
          <Cross size={6} color="#fff" weight={2} />
        </button>
      </div>
      <div className="mr-[5px] mb-1 ml-[2px] flex-1 border-t border-l border-[#b4b4b4] bg-white pt-2 pr-[9px] pl-2">
        <div className="flex h-[115px] border border-[#a0675a] bg-linear-to-b from-[#cfa090] to-[#e2b3a2] pt-[3px] pr-[3px] pb-[3px]">
          <span className="w-6 pr-[5px] text-right text-[14px] leading-4 font-bold text-[#4a3a36]">1</span>
          <div className="flex-1 border border-[#6f6f6f] bg-white pt-[25px] pl-[6px] font-['Lato',sans-serif] text-[6px] leading-[7px] text-[#222] shadow-[1px_1px_2px_#6f5a52]">
            <div className="flex gap-[3px]">
              <span className="mt-[3px] h-[2px] w-[2px] rounded-full bg-black" />
              <p className="whitespace-nowrap">
                {bodyLines.map((l) => (
                  <span key={l} className="block">{l}</span>
                ))}
              </p>
            </div>
          </div>
        </div>
      </div>
      <button aria-label="Hide slides panel" className="absolute top-[408px] -right-[6px] z-10 flex h-[73px] w-[7px] items-center justify-center bg-[#999]">
        <svg width="5" height="8" viewBox="0 0 5 8" aria-hidden="true">
          <path d="M5 0v8L0 4Z" fill="#fff" />
        </svg>
      </button>
    </aside>
  );
}

/* ---------- editing area ---------- */

function InfoBar({ text, action }: { text: string; action: string }) {
  return (
    <div className="flex h-10 items-center border border-[#bfbfbf] bg-[#bde5f7] pb-px text-[14px] text-[#111]">
      <svg width="30" height="30" viewBox="0 0 30 30" aria-hidden="true" className="ml-[3px]">
        <circle cx="15" cy="15" r="14.500" fill="#1f86dc" stroke="#2c5f8a" />
        <path d="M1 16a14 14 0 0 0 28 0Z" fill="#3b9de4" />
        <circle cx="15" cy="7.500" r="2" fill="#fff" />
        <path d="M15 11.500v13" stroke="#fff" strokeWidth="3.500" />
      </svg>
      <span className="ml-[7px]">{text}</span>
      <button className="mr-[7px] ml-auto h-[33px] rounded-md border border-[#c9c9c9] bg-white px-4 text-[#3d3d3d]">{action}</button>
      <button aria-label={`Dismiss: ${text}`} className="mr-[4px]">
        <Cross size={18} color="#0f4f87" weight={1} />
      </button>
    </div>
  );
}

function Editor() {
  return (
    <main className="ml-[7px] flex min-w-0 flex-1 flex-col">
      <InfoBar text="Help us make LibreOffice even better!" action="Get involved" />
      <InfoBar text="Your donations support our worldwide community." action="Donate" />
      <div className="flex min-h-0 flex-1">
        <section aria-label="Slide 1" className="mt-[11px] mr-[54px] mb-[18px] ml-[43px] flex-1 border-2 border-[#7d7d7d] bg-white px-[54px] pt-[29px] font-['Lato',sans-serif]">
          <div className="mr-px flex h-[130px] items-center justify-center border-[6px] border-[#fad2c6]">
            <p className="border border-[#e95420] bg-[#f9d2c6] pt-px text-[16px] leading-[19px] font-light text-black">Neural Network</p>
          </div>
          <ul className="pt-[26px] pl-[45px] text-[43px] leading-[55px] text-black">
            <li className="relative whitespace-nowrap">
              <span className="absolute top-[19px] -left-[37px] h-3 w-3 rounded-full bg-black" />
              {bodyLines.map((l) => (
                <span key={l} className="block">{l}</span>
              ))}
            </li>
          </ul>
        </section>
        <div className="mr-[2px] flex w-[7px] flex-col">
          <span className="mt-[198px] h-[408px] rounded-sm bg-[#8a8a8a]" />
        </div>
      </div>
      <div className="h-[9px]">
        <span className="ml-[362px] block h-[6px] w-[403px] rounded-sm bg-[#8a8a8a]" />
      </div>
    </main>
  );
}

/* ---------- sidebar ---------- */

const Chevron = () => (
  <svg width="11" height="7" viewBox="0 0 11 7" fill="none" stroke="#4a4a48" strokeWidth="1.200" aria-hidden="true" className="block">
    <path d="M1 1l4.500 4.500L10 1" />
  </svg>
);

function Section({ name }: { name: string }) {
  return (
    <div className="flex h-[18px] items-center bg-[#ebebeb] pr-[3px] pl-[3px]">
      <button className="flex items-center gap-[3px] text-[14px] leading-[18px] font-bold text-[#3d3d3d]" aria-expanded="true">
        <Chevron />
        {name}
      </button>
      <button aria-label={`${name} options`} className="ml-auto">
        <svg width="12" height="12" viewBox="0 0 12 12" fill="none" stroke="#7a7a7a" aria-hidden="true">
          <circle cx="6" cy="6" r="5" strokeDasharray="2 1" strokeWidth="1.500" />
          <circle cx="6" cy="6" r="4" fill="#ddd" />
          <circle cx="6" cy="6" r="1.500" />
        </svg>
      </button>
    </div>
  );
}

function SideButton({ label, on, drop, children }: Kids & { label: string; on?: boolean; drop?: boolean }) {
  return (
    <div className="flex">
      <button aria-label={label} className={`flex h-[34px] w-[37px] items-center ${on ? "rounded-md border border-[#c6c6c6] bg-[#d5d5d5] pl-[5px]" : "pl-[7px]"}`}>
        <Svg>{children}</Svg>
      </button>
      {drop && (
        <button aria-label={`${label} options`} className="flex w-[18px] items-center pl-[3px]">
          <Chevron />
        </button>
      )}
    </div>
  );
}

function Combo({ label, value, width, dropWidth }: { label: string; value: string; width: string; dropWidth: string }) {
  return (
    <div className={`flex h-[34px] overflow-hidden rounded-md border border-[#c4c4c4] bg-white ${width}`}>
      <input aria-label={label} defaultValue={value} className="min-w-0 flex-1 pb-px pl-2 text-[14px] text-[#111] outline-none" />
      <button aria-label={`${label} list`} className={`flex items-center justify-center border-l border-[#c4c4c4] ${dropWidth}`}>
        <Chevron />
      </button>
    </div>
  );
}

function Spin({ label, icon }: { label: string; icon: React.ReactNode }) {
  return (
    <div className="flex h-[42px] items-center">
      <span className="w-[31px] pl-[2px]">
        <Svg>{icon}</Svg>
      </span>
      <div className="flex h-[42px] w-[186px] overflow-hidden rounded-md border border-[#c4c4c4] bg-white">
        <input aria-label={label} defaultValue="0.00 cm" className="min-w-0 flex-1 pb-px pl-2 text-[14px] text-[#111] outline-none" />
        <button aria-label={`Decrease ${label}`} className="flex w-[35px] items-center justify-center border-l border-[#e6e6e6]">
          <span className="h-px w-[10px] bg-[#d8d8d8]" />
        </button>
        <button aria-label={`Increase ${label}`} className="flex w-[35px] items-center justify-center border-l border-[#e6e6e6] pr-px pb-px">
          <svg width="11" height="11" viewBox="0 0 11 11" stroke="#3d3d3d" aria-hidden="true">
            <path d="M0 5.500h11M5.500 0v11" />
          </svg>
        </button>
      </div>
    </div>
  );
}

type Bar = [number, number, number];
const Bars = ({ rows, c = "#1e1e1c" }: { rows: Bar[]; c?: string }) => (
  <g stroke={c}>
    {rows.map(([x, y, w], i) => (
      <path key={i} d={`M${x} ${y}.500h${w}`} />
    ))}
  </g>
);
const Tri = ({ d, o = 1 }: { d: string; o?: number }) => <path d={d} fill={ORANGE} stroke="none" opacity={o} />;
const DIM = "#959595";

const incIndent = (
  <>
    <Bars rows={[[12, 7, 7], [12, 10, 7], [12, 13, 7], [7, 16, 12]]} />
    <Tri d="M5 7v5l4-2.500Z" />
  </>
);

const tabs: { label: string; on?: boolean; art: React.ReactNode }[] = [
  {
    label: "Properties",
    on: true,
    art: (
      <g stroke="none">
        <rect x="4" y="4" width="16" height="7" rx="3" fill={ORANGE} />
        <rect x="4" y="13" width="16" height="7" rx="3" fill={ORANGE} />
        <circle cx="16.500" cy="7.500" r="2.500" fill="#fff" />
        <circle cx="7.500" cy="16.500" r="2.500" fill="#fff" />
      </g>
    ),
  },
  {
    label: "Styles",
    art: (
      <>
        <path d="M1 21.500 6 17" stroke="#f5a08e" strokeWidth="2.600" />
        <Letter x={17} y={13} s={15} w={800}>A</Letter>
        <path d="M3 12q0-4 4-5l3 2 6 6q1 2-1 3l-3 1-5-5v4l-2-1Z" fill="#fff" stroke="#5a5a58" />
        <path d="M7 7l7 8" stroke="#5a5a58" />
      </>
    ),
  },
  {
    label: "Gallery",
    art: (
      <>
        <rect x="2.500" y="3.500" width="15" height="13" rx="1" fill="#d860c8" />
        <rect x="5.500" y="7.500" width="16" height="13" rx="1" fill="#d860c8" />
        <path d="M9 18l3-4 2 2 2-2 3 4Z" fill="#fff" stroke="none" />
        <circle cx="17" cy="12" r="1" fill="#fff" stroke="none" />
      </>
    ),
  },
  {
    label: "Navigator",
    art: (
      <>
        <circle cx="12" cy="12" r="9.500" fill="#4f74e3" />
        <path d="M16 8l-1.500 5.500L10 10Z" fill="#f03a52" stroke="none" />
        <path d="M7.500 17l2-7 5 4Z" fill="#fff" stroke="none" />
      </>
    ),
  },
  { label: "Shapes", art: icons.diamond },
  {
    label: "Slide Transition",
    art: (
      <>
        <Board />
        <path d="M17 14.500l5 4-5 4ZM22.500 15v7h1.500v-7Z" fill={ORANGE} stroke="none" />
      </>
    ),
  },
  { label: "Animation", art: <Film c="#b53cb0" /> },
  { label: "Master Slides", art: <MasterSlide /> },
];

function Sidebar() {
  const row = "flex h-[34px] justify-between pr-[9px] pl-[9px]";
  return (
    <aside aria-label="Properties" className="relative mt-px flex w-[511px] shrink-0 border-l border-[#b4b4b4] bg-[#fafafa] pl-2">
      <button aria-label="Hide sidebar" className="absolute top-[407px] -left-px z-10 flex h-[73px] w-[7px] items-center justify-center bg-[#999]">
        <svg width="5" height="8" viewBox="0 0 5 8" aria-hidden="true">
          <path d="M0 0v8l5-4Z" fill="#fff" />
        </svg>
      </button>
      <div className="flex w-[452px] shrink-0 flex-col">
        <div className="flex h-[25px] items-center pr-[6px] pl-px">
          <svg width="9" height="14" viewBox="0 0 9 14" fill="#8a8a8a" aria-hidden="true">
            {[0, 5, 10].map((y) => [0, 5].map((x) => <rect key={`${x}${y}`} x={x} y={y} width="3" height="3" rx="1" />))}
          </svg>
          <h2 className="ml-[6px] text-[14px] font-bold text-[#3d3d3d]">Properties</h2>
          <button aria-label="Close sidebar deck" className="ml-auto">
            <Cross />
          </button>
        </div>
        <Section name="Character" />
        <div className="mt-[10px] flex justify-between pr-[9px] pl-[10px]">
          <Combo label="Font name" value="Calibri" width="w-[317px]" dropWidth="w-[35px]" />
          <Combo label="Font size" value="12 pt" width="w-[101px]" dropWidth="w-[35px]" />
        </div>
        <div className={`mt-[11px] ${row}`}>
          <div className="flex">
            <SideButton label="Bold"><Letter s={16} w={900} y={18}>B</Letter></SideButton>
            <SideButton label="Italic"><path d="M9 6.500h8M6 17.500h8M13.500 6.500l-3.500 11" strokeWidth="2" /></SideButton>
            <SideButton label="Underline" drop>
              <Letter s={14} y={16} w={600}>U</Letter>
              <path d="M6 18.500h12" />
            </SideButton>
            <SideButton label="Strikethrough">
              <Letter s={16} y={18} w={500}>S</Letter>
              <path d="M6 12.500h12" stroke="#fafafa" strokeWidth="3" />
              <path d="M6 12.500h12" />
            </SideButton>
            <SideButton label="Shadow">
              <Letter x={14} y={19} s={16} c="#a0a0a0">A</Letter>
              <Letter x={11} y={17} s={15}>A</Letter>
            </SideButton>
          </div>
          <div className="flex">
            <SideButton label="Increase font size">
              <Letter x={10} y={18} s={15}>A</Letter>
              <path d="M17.500 11V7" stroke={ORANGE} />
              <Tri d="M15 8l2.500-4L20 8Z" />
            </SideButton>
            <SideButton label="Decrease font size">
              <Letter x={10} y={17} s={15}>A</Letter>
              <path d="M17.500 12v4" stroke={ORANGE} />
              <Tri d="M15 15.500l2.500 4 2.500-4Z" />
            </SideButton>
          </div>
        </div>
        <div className={`mt-[11px] ${row}`}>
          <div className="flex gap-[13px]">
            <SideButton label="Font color" drop>
              <Letter y={15} s={14} w={600}>A</Letter>
              <path d="M4 18h16" stroke="#c9211e" strokeWidth="4" />
            </SideButton>
            <SideButton label="Highlighting color" drop>
              <rect x="4" y="4" width="16" height="12" fill="#aee3f8" stroke="none" />
              <Letter y={15} s={13}>A</Letter>
              <path d="M4 18h16" stroke="#ffff00" strokeWidth="4" />
            </SideButton>
            <SideButton label="Clear formatting">
              <Letter y={17} s={14} w={600} italic>A</Letter>
              <path d="M5 18.500h8" />
              <circle cx="16.500" cy="16.500" r="3.500" fill="#d0142c" stroke="none" />
              <path d="M15 15l3 3M18 15l-3 3" stroke="#fff" />
            </SideButton>
          </div>
          <div className="flex">
            <SideButton label="Superscript">
              <Letter x={10} y={18} s={15}>A</Letter>
              <Letter x={17} y={9} s={7} c={ORANGE}>B</Letter>
            </SideButton>
            <SideButton label="Subscript">
              <Letter x={10} y={16} s={15}>A</Letter>
              <Letter x={17} y={20} s={7} c={ORANGE}>B</Letter>
            </SideButton>
            <span className="w-3" />
            <SideButton label="Character spacing" drop>
              <Letter x={11} y={10} s={8}>B-D</Letter>
              <path d="M7 15.500h9" stroke={ORANGE} strokeWidth="1.400" />
              <Tri d="M4 15.500l4-3v6ZM18 15.500l-4-3v6Z" />
            </SideButton>
          </div>
        </div>
        <div className="mt-[11px]"><Section name="Lists" /></div>
        <div className={`mt-[10px] ${row}`}>
          <div className="flex">
            <SideButton label="Unordered list" drop>
              <Bars rows={[[9, 6, 9], [9, 9, 6], [9, 12, 9], [9, 15, 6], [9, 17, 8]]} />
              <circle cx="5.500" cy="7.500" r="1.500" fill={ORANGE} stroke="none" />
              <circle cx="5.500" cy="14.500" r="1.500" fill={ORANGE} stroke="none" />
            </SideButton>
            <SideButton label="Ordered list" drop>
              <Bars rows={[[10, 6, 9], [10, 9, 6], [10, 12, 9], [10, 15, 6], [10, 17, 8]]} />
              <path d="M6 6.500h3M7.500 6.500v3M6 9.500h3M4 13.500h5M4 17.500h5M5.500 13.500v4M7.500 13.500v4" stroke={ORANGE} />
            </SideButton>
          </div>
          <div className="flex">
            <SideButton label="Demote outline level">
              <Bars rows={[[11, 7, 7], [11, 9, 7], [11, 12, 7], [6, 14, 12], [6, 16, 12]]} />
              <Tri d="M4 7v5l4-2.500Z" />
            </SideButton>
            <SideButton label="Promote outline level">
              <Bars c={DIM} rows={[[11, 7, 7], [11, 9, 7], [11, 12, 7], [6, 14, 12], [6, 16, 12]]} />
              <Tri o={0.5} d="M8 7v5L4 9.500Z" />
            </SideButton>
            <SideButton label="Move down">
              <Bars c={DIM} rows={[[11, 7, 7], [11, 9, 7], [11, 12, 7], [6, 14, 12], [6, 16, 12]]} />
              <Tri o={0.5} d="M4 7h5l-2.500 4Z" />
            </SideButton>
            <SideButton label="Move up">
              <Bars c={DIM} rows={[[11, 7, 7], [11, 9, 7], [11, 12, 7], [6, 14, 12], [6, 16, 12]]} />
              <Tri o={0.5} d="M4 11h5L6.500 7Z" />
            </SideButton>
          </div>
        </div>
        <div className="mt-[11px]"><Section name="Paragraph" /></div>
        <div className={`mt-[10px] ${row}`}>
          <div className="flex">
            <SideButton label="Align left"><Bars rows={[[6, 7, 12], [6, 10, 8], [6, 13, 11], [6, 16, 7]]} /></SideButton>
            <SideButton label="Align center" on><Bars rows={[[6, 7, 12], [8, 10, 8], [7, 13, 10], [8, 16, 8]]} /></SideButton>
            <SideButton label="Align right"><Bars rows={[[6, 7, 12], [10, 10, 8], [7, 13, 11], [11, 16, 7]]} /></SideButton>
            <SideButton label="Justify"><Bars rows={[[6, 7, 12], [6, 10, 12], [6, 13, 12], [6, 16, 12]]} /></SideButton>
          </div>
          <div className="flex">
            <SideButton label="Align top">
              <Bars rows={[[4, 5, 14], [7, 7, 8]]} />
              <path d="M11 19v-5" stroke={ORANGE} strokeWidth="2" />
              <Tri d="M8 15l3-4 3 4Z" />
            </SideButton>
            <SideButton label="Center vertically" on>
              <Bars rows={[[5, 10, 14], [8, 12, 8]]} />
              <path d="M12 4v2M12 20v-2" stroke={ORANGE} strokeWidth="2" />
              <Tri d="M9 6h6l-3 3ZM9 18h6l-3-3Z" />
            </SideButton>
            <SideButton label="Align bottom">
              <Bars rows={[[4, 15, 14], [7, 17, 8]]} />
              <path d="M11 4v5" stroke={ORANGE} strokeWidth="2" />
              <Tri d="M8 8h6l-3 4Z" />
            </SideButton>
          </div>
        </div>
        <div className="mt-[10px] mr-2 ml-[9px] h-px bg-[#dedede]" />
        <div className="grid w-[446px] grid-cols-[217px_217px] gap-x-[6px] pl-[6px]">
          <div>
            <h3 className="h-6 text-[14px] leading-6 text-[#3d3d3d]">Spacing:</h3>
            <div className="mt-[2px] flex pl-[3px]">
              <SideButton label="Increase paragraph spacing">
                <Bars rows={[[4, 5, 9], [4, 7, 9], [4, 9, 9], [4, 15, 9], [4, 17, 9], [4, 19, 9]]} />
                <Tri d="M15 11l2.500-4 2.500 4ZM15 15l2.500 4 2.500-4Z" />
              </SideButton>
              <SideButton label="Decrease paragraph spacing">
                <Bars c={DIM} rows={[[4, 6, 9], [4, 9, 9], [4, 11, 9], [4, 14, 9], [4, 16, 9], [4, 19, 9]]} />
                <Tri o={0.5} d="M15 8l2.500 4L20 8ZM15 19l2.500-4 2.500 4Z" />
              </SideButton>
            </div>
            <div className="mt-2 flex flex-col gap-[3px]">
              <Spin label="Above paragraph spacing" icon={<><Bars rows={[[6, 4, 12], [6, 6, 12], [6, 13, 12], [6, 15, 12], [6, 18, 12]]} /><Tri d="M8.500 12.500l3.500-3.500 3.500 3.500Z" /></>} />
              <Spin label="Below paragraph spacing" icon={<><Bars rows={[[6, 5, 12], [6, 7, 12], [6, 9, 12], [6, 17, 12], [6, 19, 12]]} /><Tri d="M8.500 11.500l3.500 3 3.500-3Z" /></>} />
              <div className="flex h-[42px] items-center pl-[6px]">
                <SideButton label="Line spacing" drop>
                  <Bars rows={[[4, 5, 9], [4, 7, 9], [4, 9, 9], [4, 13, 9], [4, 15, 9], [4, 17, 9]]} />
                  <path d="M17.500 8v7" stroke={ORANGE} strokeWidth="1.300" />
                  <Tri d="M15 9.500l2.500-4 2.500 4ZM15 14l2.500 4 2.500-4Z" />
                </SideButton>
              </div>
            </div>
          </div>
          <div>
            <h3 className="h-6 text-[14px] leading-6 text-[#3d3d3d]">Indent:</h3>
            <div className="mt-[2px] flex pl-[3px]">
              <SideButton label="Increase indent">{incIndent}</SideButton>
              <SideButton label="Decrease indent">
                <Bars rows={[[12, 7, 7], [12, 10, 7], [12, 13, 7], [7, 16, 12]]} />
                <Tri d="M9 7v5L5 9.500Z" />
              </SideButton>
              <SideButton label="Hanging indent">
                <Bars rows={[[7, 7, 12], [12, 10, 7], [12, 13, 7], [12, 16, 7]]} />
                <Tri d="M5 13v5l4-2.500Z" />
              </SideButton>
            </div>
            <div className="mt-2 flex flex-col gap-[3px]">
              <Spin label="Before text indent" icon={<><Bars rows={[[12, 7, 8], [12, 9, 8], [12, 12, 8], [12, 14, 8], [12, 16, 8]]} /><Tri d="M5 7v5l4-2.500Z" /></>} />
              <Spin label="After text indent" icon={<><Bars rows={[[4, 7, 8], [4, 9, 8], [4, 12, 8], [4, 14, 8], [4, 16, 8]]} /><Tri d="M19 7v5l-4-2.500Z" /></>} />
              <Spin label="First line indent" icon={incIndent} />
            </div>
          </div>
        </div>
      </div>
      <div role="tablist" aria-label="Sidebar decks" className="ml-1 flex w-9 flex-col gap-2">
        <button aria-label="Sidebar settings" className="flex h-[38px] w-9 items-center justify-center">
          <svg width="10" height="11" viewBox="0 0 10 11" stroke={INK} aria-hidden="true">
            <path d="M0 1.500h10M0 5.500h10M0 9.500h10" />
          </svg>
        </button>
        {tabs.map((t) => (
          <button
            key={t.label}
            role="tab"
            aria-label={t.label}
            aria-selected={!!t.on}
            className={`flex h-[34px] w-9 items-center justify-center ${t.on ? "rounded-md border border-[#c6c6c6] bg-[#d5d5d5]" : ""}`}
          >
            <Svg>{t.art}</Svg>
          </button>
        ))}
      </div>
      <svg width="18" height="26" viewBox="0 0 18 26" aria-hidden="true" className="pointer-events-none absolute top-[330px] left-[78px] z-20">
        <path d="M1 1v19.500l4.500-4 3 7.500 4-1.700-3-7.300h6.500Z" fill="#222" stroke="#fff" strokeWidth="1.300" />
      </svg>
    </aside>
  );
}

/* ---------- status bar ---------- */

const Tick = () => <span className="h-[14px] w-px shrink-0 bg-[#dcdcdc]" />;

function StatusBar() {
  return (
    <footer className="flex h-[21px] shrink-0 items-center border-t border-[#b4b4b4] pt-px text-[12px] whitespace-nowrap text-[#3d3d3d]">
      <span className="w-[75px] pl-[10px]">Slide 1 of 1</span>
      <Tick />
      <span className="w-[540px] pl-2">TextEdit: Paragraph 1, Row 1, Column 15</span>
      <span className="flex-1 text-left">Blank Slide</span>
      <Tick />
      <span className="flex w-[104px] items-center gap-1 pl-[10px]">
        <svg width="16" height="14" viewBox="0 0 16 14" fill="none" stroke={INK} aria-hidden="true">
          <path d="M6.500 3.500h8v8h-12v-4" />
          <path d="M0 3.500h6M3.500 0v7" stroke={ORANGE} />
        </svg>
        1.27 / 0.76
      </span>
      <span className="flex w-[111px] items-center gap-1 pl-[10px]">
        <svg width="16" height="14" viewBox="0 0 16 14" fill="none" stroke={INK} aria-hidden="true">
          <path d="M5.500 5.500h9v7h-9Z" />
          <path d="M4 1.500h12M4.500 0v3M15.500 0v3M1.500 5v8M0 5.500h3M0 12.500h3" stroke={ORANGE} />
        </svg>
        22.86 x 3.17
      </span>
      <Tick />
      <span className="flex w-[21px] justify-center">
        <Svg size={16}>{icons.save}</Svg>
      </span>
      <Tick />
      <span className="w-7" />
      <Tick />
      <span className="w-[388px] text-center">English (USA)</span>
      <Tick />
      <button aria-label="Fit slide to current window" className="flex w-[21px] justify-center">
        <svg width="14" height="14" viewBox="0 0 14 14" fill="none" stroke={ORANGE} aria-hidden="true">
          <path d="M7 1v12M1 7h12" />
          <path d="M5 3l2-3 2 3ZM5 11l2 3 2-3ZM3 5 0 7l3 2ZM11 5l3 2-3 2Z" fill={ORANGE} stroke="none" />
        </svg>
      </button>
      <Tick />
      <button aria-label="Zoom out" className="flex w-[22px] items-center justify-center pl-[4px]">
        <span className="h-[2px] w-2 bg-[#5a5a58]" />
      </button>
      <input
        type="range"
        aria-label="Zoom"
        defaultValue={50}
        className="h-3 w-[98px] appearance-none bg-[linear-gradient(#999,#999)] bg-[length:100%_2px] bg-center bg-no-repeat [&::-webkit-slider-thumb]:h-[9px] [&::-webkit-slider-thumb]:w-[9px] [&::-webkit-slider-thumb]:appearance-none [&::-webkit-slider-thumb]:rounded-full [&::-webkit-slider-thumb]:border [&::-webkit-slider-thumb]:border-[#5a5a58] [&::-webkit-slider-thumb]:bg-white"
      />
      <button aria-label="Zoom in" className="flex w-[21px] justify-center">
        <svg width="8" height="8" viewBox="0 0 8 8" stroke="#5a5a58" strokeWidth="2" aria-hidden="true">
          <path d="M0 4h8M4 0v8" />
        </svg>
      </button>
      <Tick />
      <span className="w-12 pl-[7px]">107%</span>
    </footer>
  );
}

export default function App() {
  return (
    <div className="flex h-screen flex-col overflow-hidden bg-[#fafafa] font-['Noto_Sans','Open_Sans',sans-serif]">
      <TopBar />
      <div className="flex min-h-0 flex-1">
        <Dock />
        <div className="flex min-w-0 flex-1 flex-col">
          <TitleBar />
          <MenuBar />
          <div className="flex h-[78px] shrink-0 flex-col gap-1 pt-px">
            <Toolbar tools={standardBar} label="Standard" />
            <Toolbar tools={drawBar} label="Drawing" />
          </div>
          <div className="flex min-h-0 flex-1">
            <SlidesPanel />
            <Editor />
            <Sidebar />
          </div>
          <StatusBar />
        </div>
      </div>
    </div>
  );
}
